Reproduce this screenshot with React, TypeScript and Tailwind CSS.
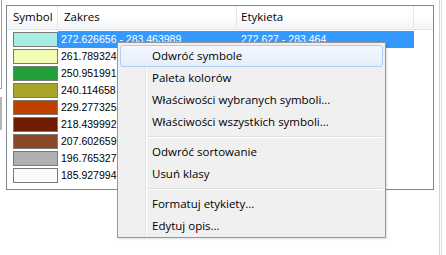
import React from "react";

const rows = [
  { c: "#a9ece3", z: "272.626656 - 283.463989", e: "272.627 - 283.464" },
  { c: "#f1fbb2", z: "261.789324 - 272.626656", e: "261.789 - 272.627" },
  { c: "#21a03a", z: "250.951991 - 261.789324", e: "250.952 - 261.789" },
  { c: "#a8a52a", z: "240.114658 - 250.951991", e: "240.115 - 250.952" },
  { c: "#c04000", z: "229.277325 - 240.114658", e: "229.277 - 240.115" },
  { c: "#701c00", z: "218.439992 - 229.277325", e: "218.440 - 229.277" },
  { c: "#8a4a28", z: "207.602659 - 218.439992", e: "207.603 - 218.440" },
  { c: "#b0b0b0", z: "196.765327 - 207.602659", e: "196.765 - 207.603" },
  { c: "#fbfbfd", z: "185.927994 - 196.765327", e: "185.928 - 196.765" },
];

const ui = { fontFamily: '"Open Sans", "Noto Sans", sans-serif' };
const num = { fontFamily: '"Liberation Sans", Arial, sans-serif' };

function Item({ label, hot }: { label: string; hot?: boolean }) {
  if (hot) {
    return (
      <div className="mx-[2px] h-[22px] rounded-[3px] border border-[#aecff7] bg-gradient-to-b from-[#f4f8fd] to-[#e6eefa] flex items-center pl-[31px] text-[11.5px] text-black">
        {label}
      </div>
    );
  }
  return (
    <div className="relative h-[22px] flex items-center pl-[34px] text-[11.5px] text-black">
      {label}
    </div>
  );
}

function Sep() {
  return (
    <div className="h-[8px] flex items-center pl-[29px] pr-[2px]">
      <div className="h-[2px] w-full border-t border-[#e0e0e0] border-b border-b-white" />
    </div>
  );
}

export default function App() {
  return (
    <div className="relative w-[446px] h-[255px] bg-white overflow-hidden flex" style={ui}>
      {/* left sliver of background window */}
      <div className="w-[6px] flex flex-col">
        <div className="h-[89px] w-[2px] border-r border-b border-[#a0a0a0]" />
        <div className="mt-[8px] h-[33px] w-[2px] bg-[#b4b4b4]" />
      </div>

      {/* list view */}
      <div className="mt-[5px] w-[428px] h-[185px] border border-[#828790] bg-white flex flex-col">
        <div className="h-[24px] flex border-b border-[#e5e5e5] bg-gradient-to-b from-white from-[40%] to-[#f3f4f6] text-[11.5px] text-black">
          <div className="w-[51px] border-r border-[#e3e8ee] flex items-center pl-[6px] pb-[1px]">Symbol</div>
          <div className="w-[179px] border-r border-[#e3e8ee] flex items-center pl-[6px] pb-[1px]">Zakres</div>
          <div className="w-[177px] border-r border-[#e3e8ee] flex items-center pl-[4px] pb-[1px]">Etykieta</div>
          <div className="flex-1" />
        </div>
        <div className="pt-[1px] flex flex-col">
          {rows.map((r, i) => (
            <div key={i} className="h-[17px] flex text-[10.5px] text-black whitespace-nowrap" style={num}>
              <div className="w-[51px] flex items-start pt-[1px] pl-[6px]">
                <div className="w-[45px] h-[15px] border border-[#7a7a7a]" style={{ backgroundColor: r.c }} />
              </div>
              {i === 0 ? (
                <div className="w-[356px] flex bg-[#3399ff] text-white">
                  <div className="w-[179px] flex items-center pl-[3px]">{r.z}</div>
                  <div className="w-[177px] flex items-center pl-[4px]">{r.e}</div>
                </div>
              ) : (
                <div className="w-[59px] flex items-center pl-[3px] overflow-hidden">{r.z}</div>
              )}
            </div>
          ))}
        </div>
      </div>

      {/* right edge */}
      <div className="ml-[5px] flex">
        <div className="w-[1px] h-full bg-[#d4d4d4]" />
        <div className="w-[1px] h-full bg-white" />
        <div className="w-[1px] h-full bg-[#dcdcdc]" />
      </div>

      {/* context menu */}
      <div className="absolute left-[117px] top-[42px] w-[269px] h-[196px] border border-[#979797] bg-[#f0f0f0] shadow-[1px_1px_2px_rgba(0,0,0,0.12)] pt-[2px]">
        <div className="absolute top-0 bottom-0 left-[27px] w-[2px] border-l border-[#e2e3e3] border-r border-r-white" />
        <div className="relative flex flex-col">
          <Item label="Odwróć symbole" hot />
          <Item label="Paleta kolorów" />
          <Item label="Właściwości wybranych symboli..." />
          <Item label="Właściwości wszystkich symboli..." />
          <Sep />
          <Item label="Odwróć sortowanie" />
          <Item label="Usuń klasy" />
          <Sep />
          <Item label="Formatuj etykiety..." />
          <Item label="Edytuj opis..." />
        </div>
      </div>
    </div>
  );
}
